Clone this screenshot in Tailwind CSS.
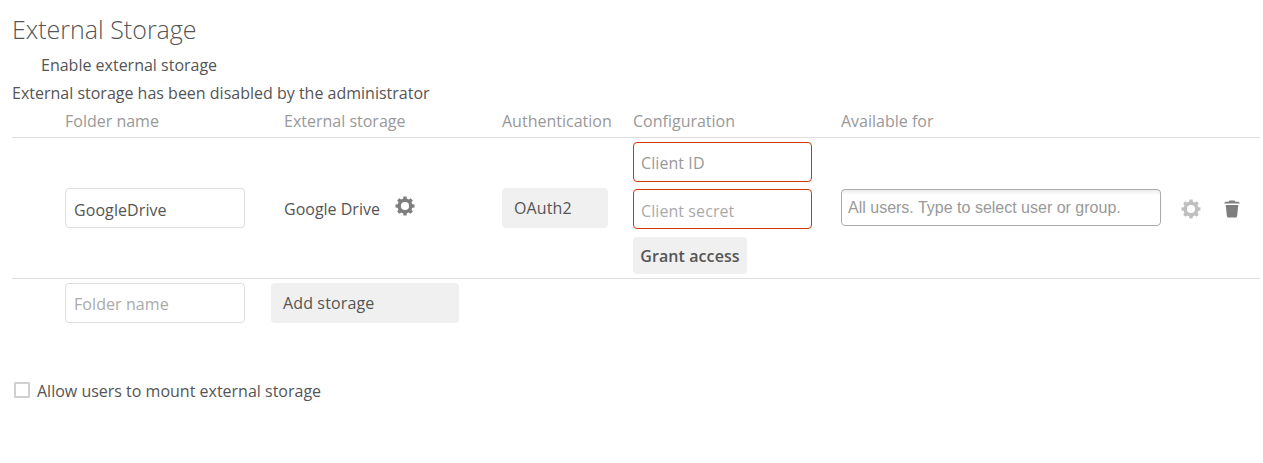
<!DOCTYPE html>
<html lang="en">
<head>
<meta charset="utf-8">
<title>External Storage</title>
<script src="https://cdn.jsdelivr.net/npm/@tailwindcss/browser@4"></script>
</head>
<body class="bg-white font-['Open_Sans','Noto_Sans',sans-serif] text-base text-[#555]">
<svg class="hidden">
  <symbol id="gear" viewBox="0 0 20 20">
    <circle cx="10" cy="10" r="5.8" fill="none" stroke="currentColor" stroke-width="3.4"/>
    <g fill="currentColor">
      <path id="teeth" d="M8 4 8.4.5h3.2L12 4zM8 16l.4 3.5h3.2L12 16z"/>
      <use href="#teeth" transform="rotate(45 10 10)"/>
      <use href="#teeth" transform="rotate(90 10 10)"/>
      <use href="#teeth" transform="rotate(135 10 10)"/>
    </g>
  </symbol>
</svg>
<main class="w-[1260px] pl-3 pt-3">
  <h2 class="h-[39px] text-[25px] leading-[35px] font-light">External Storage</h2>
  <p class="h-7 pl-[29px] leading-7">Enable external storage</p>
  <p class="h-7 leading-7">External storage has been disabled by the administrator</p>

  <div class="grid h-[31px] grid-cols-[53px_219px_218px_131px_208px_1fr] border-b border-[#ddd] leading-7 text-[#999]">
    <span></span>
    <span>Folder name</span>
    <span>External storage</span>
    <span>Authentication</span>
    <span>Configuration</span>
    <span>Available for</span>
  </div>

  <div class="grid h-[141px] grid-cols-[53px_219px_218px_131px_208px_341px_1fr] items-center border-b border-[#ddd]">
    <span></span>
    <input class="h-10 w-[180px] rounded-[4px] border border-[#ddd] px-2 pt-[3px] tracking-[0.08px]" value="GoogleDrive">
    <div class="flex items-center gap-[15px] pt-0.5">
      <span>Google Drive</span>
      <svg class="mb-1.5 size-5 text-[#7e7e7e]"><use href="#gear"/></svg>
    </div>
    <div class="flex h-10 w-[106px] items-center rounded-[4px] bg-[#f0f0f0] pl-3 tracking-[0.1px]">OAuth2</div>
    <div class="flex flex-col">
      <input class="h-10 w-[179px] rounded-[4px] border border-[#ce3702] px-[7px] pt-px tracking-[0.08px] placeholder:text-[#999]" placeholder="Client ID">
      <input class="mt-[7px] h-10 w-[179px] rounded-[4px] border border-[#ce3702] px-[7px] pt-[3px] tracking-[0.08px] placeholder:text-[#aaa]" placeholder="Client secret">
      <button class="mt-2 h-[37px] w-[114px] rounded-[4px] bg-[#f0f0f0] font-semibold tracking-[0.08px]">Grant access</button>
    </div>
    <input class="mb-[2px] h-[37px] w-80 rounded border border-[#aaa] bg-linear-to-b from-[#eee] from-1% to-white to-15% px-1.5 pt-px font-['Liberation_Sans',Arial,sans-serif] placeholder:text-[#999]" placeholder="All users. Type to select user or group.">
    <div class="flex items-center gap-[23px] pt-0.5">
      <svg class="-ml-px size-5 text-[#bfbfbf]"><use href="#gear"/></svg>
      <svg class="h-[18px] w-4 text-[#7e7e7e]" viewBox="0 0 16 18" fill="currentColor">
        <path d="M5.5.4h5l.8 1.3h3.2q1.2.3 1.3 1.9H.2Q.3 2 1.5 1.7h3.2zM1.7 5h12.6l-1.2 11.2q-.2 1.3-1.4 1.3H4.3q-1.2 0-1.4-1.3z"/>
      </svg>
    </div>
  </div>

  <div class="grid grid-cols-[53px_206px_1fr] pt-1">
    <span></span>
    <input class="h-10 w-[180px] rounded-[4px] border border-[#ddd] px-2 pt-px tracking-[0.08px] placeholder:text-[#aaa]" placeholder="Folder name">
    <div class="flex h-10 w-[188px] items-center rounded-[4px] bg-[#f0f0f0] pl-3 tracking-[0.13px]">Add storage</div>
  </div>

  <label class="mt-[54px] flex h-7 items-center gap-[7px] pl-[2px]">
    <input type="checkbox" class="-mt-0.5 size-4 appearance-none rounded-[1px] border-2 border-[#d0d0d0] bg-white">
    <span>Allow users to mount external storage</span>
  </label>
</main>
</body>
</html>
